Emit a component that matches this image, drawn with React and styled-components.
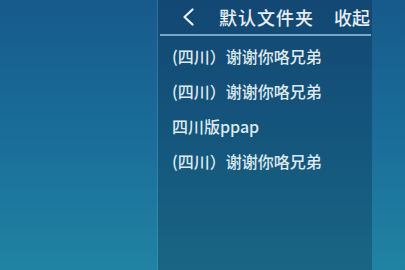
import React from "react";
import styled, { createGlobalStyle } from "styled-components";

const GlobalStyle = createGlobalStyle`
  html, body {
    margin: 0;
    padding: 0;
    width: 405px;
    height: 270px;
    overflow: hidden;
  }
  body {
    font-family: "Noto Sans CJK SC", "Noto Sans", sans-serif;
  }
`;

const Screen = styled.div`
  width: 405px;
  height: 270px;
  display: flex;
  padding-left: 158px;
  box-sizing: border-box;
  background: linear-gradient(180deg, #175a8c 0%, #1a6d99 50%, #2183a3 100%);
`;

const Panel = styled.div`
  width: 214px;
  height: 100%;
  display: flex;
  flex-direction: column;
  overflow: hidden;
  background: rgba(8, 24, 50, 0.28);
  box-shadow: -1px 0 0 rgba(120, 170, 210, 0.25);
`;

const Header = styled.div`
  height: 34px;
  display: flex;
  align-items: center;
  padding-left: 24px;
  color: #e8eef4;
  font-size: 18px;
  font-weight: 500;
  white-space: nowrap;
`;

const BackButton = styled.div`
  width: 12px;
  height: 18px;
  display: flex;
  align-items: center;
  margin-right: 25px;
`;

const Title = styled.span`
  letter-spacing: 1px;
`;

const Collapse = styled.span`
  margin-left: 20px;
`;

const Divider = styled.div`
  height: 2px;
  margin: 0 1px 0 2px;
  background: #8ab7d6;
  opacity: 0.85;
`;

const List = styled.div`
  display: flex;
  flex-direction: column;
  padding-top: 2px;
`;

const Row = styled.div`
  height: 35px;
  display: flex;
  align-items: center;
  padding-left: 14px;
  color: #dfe9f0;
  font-size: 16px;
  font-weight: 500;
  white-space: nowrap;
`;

const items = [
  "(四川）谢谢你咯兄弟",
  "(四川）谢谢你咯兄弟",
  "四川版ppap",
  "(四川）谢谢你咯兄弟",
];

export default function App() {
  return (
    <>
      <GlobalStyle />
      <Screen>
        <Panel>
          <Header>
            <BackButton>
              <svg width="12" height="18" viewBox="0 0 12 18">
                <path
                  d="M10.5 1.5 L2.5 9 L10.5 16.5"
                  fill="none"
                  stroke="#eef3f7"
                  strokeWidth="2.2"
                  strokeLinecap="round"
                  strokeLinejoin="round"
                />
              </svg>
            </BackButton>
            <Title>默认文件夹</Title>
            <Collapse>收起</Collapse>
          </Header>
          <Divider />
          <List>
            {items.map((t, i) => (
              <Row key={i}>{t}</Row>
            ))}
          </List>
        </Panel>
      </Screen>
    </>
  );
}
